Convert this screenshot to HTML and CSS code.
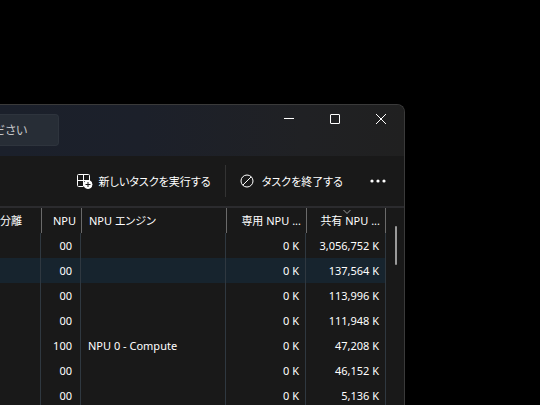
FILE: index.html
```html
<!DOCTYPE html>
<html lang="ja">
<head>
    <meta charset="UTF-8">
    <meta name="viewport" content="width=device-width, initial-scale=1">
    <title>タスク マネージャー</title>
    <link rel="stylesheet" href="styles.css">
</head>
<body>
    <div class="window">
        <header class="titlebar">
            <input class="search" type="text" aria-label="検索" placeholder="ださい">
            <div class="controls">
                <button type="button" aria-label="最小化">
                    <svg width="12" height="12" viewBox="0 0 12 12"><path d="M1 5.500h10"/></svg>
                </button>
                <button type="button" aria-label="最大化">
                    <svg width="12" height="12" viewBox="0 0 12 12"><rect x="1.500" y="1.500" width="9" height="9" rx="0.500"/></svg>
                </button>
                <button type="button" aria-label="閉じる">
                    <svg width="12" height="12" viewBox="0 0 12 12"><path d="M1 1l10 10M11 1L1 11"/></svg>
                </button>
            </div>
        </header>

        <div class="toolbar">
            <button type="button" class="tool run">
                <svg width="16" height="16" viewBox="0 0 16 16">
                    <path d="M6 13.500H1.500a1 1 0 0 1-1-1v-10a1 1 0 0 1 1-1h10a1 1 0 0 1 1 1V7M6.500 1.500v12M.5 7.500H13"/>
                    <circle class="badge" cx="11" cy="11.500" r="4"/>
                    <path class="plus" d="M11 9v5M8.500 11.500h5"/>
                </svg>
                <span>新しいタスクを実行する</span>
            </button>
            <button type="button" class="tool end">
                <svg width="14" height="14" viewBox="0 0 14 14">
                    <circle cx="7" cy="7" r="6"/>
                    <path d="M2.800 11.200l8.400-8.400"/>
                </svg>
                <span>タスクを終了する</span>
            </button>
            <button type="button" class="tool more" aria-label="その他">
                <svg width="16" height="4" viewBox="0 0 16 4">
                    <circle cx="2" cy="2" r="1.600"/><circle cx="8" cy="2" r="1.600"/><circle cx="14" cy="2" r="1.600"/>
                </svg>
            </button>
        </div>

        <div class="details">
            <table>
                <colgroup>
                    <col class="col-iso">
                    <col class="col-npu">
                    <col>
                    <col class="col-mem">
                    <col class="col-mem">
                </colgroup>
                <thead>
                    <tr>
                        <th class="left">分離</th>
                        <th>NPU</th>
                        <th class="left">NPU エンジン</th>
                        <th>専用 NPU ...</th>
                        <th class="sorted">
                            <svg class="sort" width="8" height="4" viewBox="0 0 8 4"><path d="M.5 0L4 3.500 7.500 0"/></svg>
                            共有 NPU ...
                        </th>
                    </tr>
                </thead>
                <tbody>
                    <tr><td></td><td>00</td><td class="left"></td><td>0 K</td><td>3,056,752 K</td></tr>
                    <tr class="hover"><td></td><td>00</td><td class="left"></td><td>0 K</td><td>137,564 K</td></tr>
                    <tr><td></td><td>00</td><td class="left"></td><td>0 K</td><td>113,996 K</td></tr>
                    <tr><td></td><td>00</td><td class="left"></td><td>0 K</td><td>111,948 K</td></tr>
                    <tr><td></td><td>100</td><td class="left">NPU 0 - Compute</td><td>0 K</td><td>47,208 K</td></tr>
                    <tr><td></td><td>00</td><td class="left"></td><td>0 K</td><td>46,152 K</td></tr>
                    <tr><td></td><td>00</td><td class="left"></td><td>0 K</td><td>5,136 K</td></tr>
                </tbody>
            </table>
            <div class="scrollbar"><div class="thumb"></div></div>
        </div>
    </div>
</body>
</html>
```
FILE: styles.css
```css
*{
    box-sizing: border-box;
}
body{
    margin: 0;
    height: 100vh;
    padding: 104px 25% 0 0;
    display: flex;
    overflow: hidden;
    background-color: #000;
    color: #fff;
    font-family: "Noto Sans", "Noto Sans CJK JP", sans-serif;
    font-size: 11px;
    font-feature-settings: "palt";
}
button, input{
    margin: 0;
    padding: 0;
    border: 0;
    background: none;
    color: inherit;
    font: inherit;
    font-feature-settings: inherit;
}
svg{
    display: block;
    fill: none;
    stroke: #fff;
}
.window{
    flex: 1;
    min-width: 0;
    display: flex;
    flex-direction: column;
    border: 1px solid #3a3a3a;
    border-width: 1px 1px 0 0;
    border-top-right-radius: 8px;
    background-color: #191919;
    overflow: hidden;
}
.titlebar{
    flex: none;
    height: 51px;
    display: flex;
    justify-content: space-between;
    align-items: flex-start;
    background: linear-gradient(90deg, #1b202b 0%, #1c202a 35%, #202124 75%, #202020 100%);
}
.search{
    width: 59px;
    height: 32px;
    margin-top: 9px;
    border: 1px solid #2e343d;
    border-left: 0;
    border-radius: 0 4px 4px 0;
    background-color: #272d36;
    font-size: 12px;
    text-indent: -7px;
}
.search::placeholder{
    color: #c5c7ca;
}
.controls{
    display: flex;
}
.controls button{
    width: 46px;
    height: 28px;
    display: flex;
    justify-content: center;
    align-items: center;
}
.toolbar{
    flex: none;
    height: 52px;
    padding: 0 10px 0 70px;
    display: flex;
    align-items: center;
    justify-content: flex-end;
    border-bottom: 2px solid #2b2b2e;
}
.tool{
    height: 32px;
    display: flex;
    align-items: center;
    white-space: nowrap;
}
.run{
    padding-right: 14px;
}
.run svg{
    margin-right: 6px;
}
.badge{
    fill: #fff;
}
.plus{
    stroke: #191919;
}
.end{
    padding: 0 19px 0 14px;
    border-left: 1px solid #333;
}
.end svg{
    margin-right: 8px;
}
.more{
    padding: 0 8px;
}
.more circle{
    fill: #fff;
    stroke: none;
}
.details{
    flex: 1;
    display: flex;
    min-height: 0;
}
table{
    flex: 1;
    min-width: 0;
    align-self: flex-start;
    table-layout: fixed;
    border-collapse: separate;
    border-spacing: 0;
}
.col-iso{
    width: 41px;
}
.col-npu{
    width: 40px;
}
.col-mem{
    width: 80px;
}
th, td{
    height: 25px;
    line-height: 16px;
    font-weight: normal;
    text-align: right;
    white-space: nowrap;
}
th{
    padding: 0 5px;
}
th + th{
    border-left: 1px solid #6a6a6a;
}
th:last-child{
    border-right: 1px solid #6a6a6a;
}
td{
    padding: 0 8px 0 0;
    border-right: 1px solid #2f3840;
}
td:nth-child(n+4){
    padding-right: 6px;
}
th.left, td.left{
    padding-left: 7px;
    text-align: left;
}
th.left:first-child{
    padding-left: 0;
}
.hover td{
    background-color: #17242e;
}
.sorted{
    position: relative;
}
.sort{
    position: absolute;
    top: 2px;
    left: 50%;
    margin-left: -3px;
    stroke: #9a9a9a;
}
.scrollbar{
    flex: none;
    width: 18px;
    padding: 18px 7px 0 9px;
}
.thumb{
    height: 39px;
    border-radius: 1px;
    background-color: #9a9a9a;
}
```
